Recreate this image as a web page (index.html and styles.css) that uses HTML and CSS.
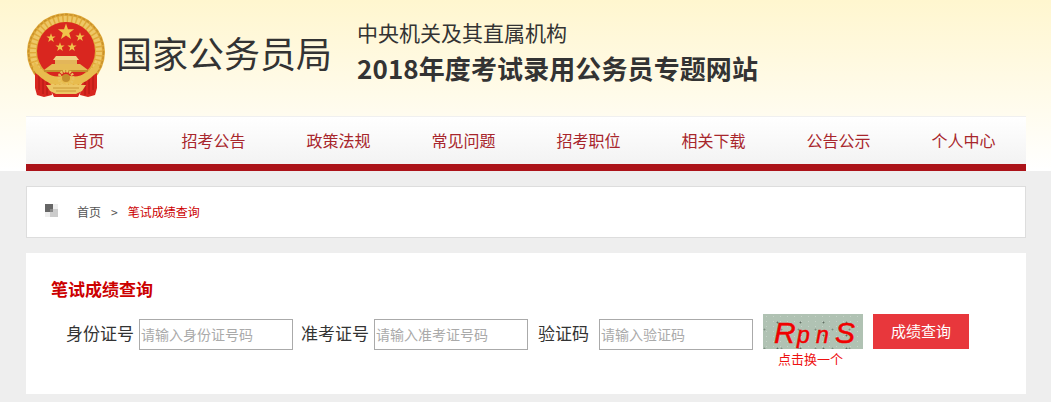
FILE: index.html
```html
<!DOCTYPE html>
<html lang="zh-CN">
<head>
    <meta charset="UTF-8">
    <meta name="viewport" content="width=device-width, initial-scale=1.0">
    <title>笔试成绩查询</title>
    <link rel="stylesheet" href="styles.css">
</head>

<body>
    <div class="top">
        <div class="wrap">
            <div class="head">
                <!-- 国徽 -->
                <svg class="emblem" viewBox="0 0 80 84" width="80" height="84">
                    <defs>
                        <polygon id="star" points="0,-1 0.235,-0.324 0.951,-0.309 0.38,0.124 0.588,0.809 0,0.4 -0.588,0.809 -0.38,0.124 -0.951,-0.309 -0.235,-0.324"/>
                    </defs>
                    <circle cx="40" cy="39" r="39" fill="#e0a93a"/>
                    <circle cx="40" cy="39" r="37.5" fill="none" stroke="#c8912a" stroke-width="1.5" stroke-dasharray="3 1.5"/>
                    <circle cx="40" cy="39" r="33" fill="none" stroke="#eec766" stroke-width="6" stroke-dasharray="3 1.5"/>
                    <circle cx="40" cy="38" r="29" fill="#d9261f"/>
                    <use href="#star" transform="translate(40 19) scale(8.5)" fill="#f0c24a"/>
                    <use href="#star" transform="translate(25 25) scale(4.8)" fill="#f0c24a"/>
                    <use href="#star" transform="translate(54 24) scale(4.8)" fill="#f0c24a"/>
                    <use href="#star" transform="translate(34 34) scale(4.8)" fill="#f0c24a"/>
                    <use href="#star" transform="translate(46 34) scale(4.8)" fill="#f0c24a"/>
                    <path d="M30 43 H50 L53 47 H27 Z" fill="#f0d283"/>
                    <path d="M29 47 H51 V51 H29 Z" fill="#e3b65a"/>
                    <path d="M26 51 H54 L62 57 H18 Z" fill="#e6bb55"/>
                    <path d="M18 57 H62 V59 H18 Z" fill="#c48e2c"/>
                    <path d="M9 60 L20 66 L25 72 L26 82 L18 84 L11 82 L9 75 Z" fill="#d8261f"/>
                    <path d="M71 60 L60 66 L55 72 L54 82 L62 84 L69 82 L71 75 Z" fill="#d8261f"/>
                    <path d="M25 78 H55 L52 84 H28 Z" fill="#d8261f"/>
                    <path d="M13 62 V77 M17 65 V81 M21 68 V82 M59 68 V82 M63 65 V81 M67 62 V77" stroke="#a8150f" stroke-width="0.8" fill="none"/>
                    <path d="M8 48 Q22 68 40 62 Q58 68 72 48 L73 56 Q58 76 40 70 Q22 76 7 56 Z" fill="#e8bc4e"/>
                    <circle cx="40" cy="65" r="7" fill="none" stroke="#e8c25e" stroke-width="3" stroke-dasharray="2 1"/>
                    <circle cx="40" cy="65" r="4" fill="#c48e2c"/>
                    <path d="M20 72 L60 72 L56 78 L50 81 L30 81 L24 78 Z" fill="#ecc765"/>
                    <path d="M27 75 H53 M30 78 H50" stroke="#c48e2c" stroke-width="0.8" fill="none"/>
                </svg>
                <div class="org">国家公务员局</div>
                <div class="site">
                    <div class="site-sub">中央机关及其直属机构</div>
                    <div class="site-name">2018年度考试录用公务员专题网站</div>
                </div>
            </div>
            <ul class="nav">
                <li>首页</li>
                <li>招考公告</li>
                <li>政策法规</li>
                <li>常见问题</li>
                <li>招考职位</li>
                <li>相关下载</li>
                <li>公告公示</li>
                <li>个人中心</li>
            </ul>
        </div>
    </div>

    <div class="wrap">
        <div class="crumb">
            <svg class="crumb-icon" viewBox="0 0 14 14" width="14" height="14">
                <rect x="0" y="0" width="8" height="8" fill="#666"/>
                <rect x="8" y="0" width="5" height="5" fill="#eee"/>
                <rect x="0" y="8" width="5" height="5" fill="#eee"/>
                <rect x="5" y="5" width="8" height="8" fill="#ccc"/>
                <rect x="5" y="5" width="3" height="3" fill="#888"/>
            </svg>
            <span class="crumb-home">首页</span>
            <span class="crumb-sep">&gt;</span>
            <span class="crumb-now">笔试成绩查询</span>
        </div>

        <div class="card">
            <h3 class="card-title">笔试成绩查询</h3>
            <div class="query">
                <label class="query-label">身份证号</label>
                <input class="query-input" type="text" placeholder="请输入身份证号码">
                <label class="query-label query-label-2">准考证号</label>
                <input class="query-input" type="text" placeholder="请输入准考证号码">
                <label class="query-label query-label-3">验证码</label>
                <input class="query-input" type="text" placeholder="请输入验证码">
                <div class="captcha">
                    <div class="captcha-img"><span class="cap-r">R</span><span>p</span><span>n</span><span class="cap-s">S</span></div>
                    <div class="captcha-tip">点击换一个</div>
                </div>
                <button class="query-btn">成绩查询</button>
            </div>
        </div>
    </div>
</body>
</html>
```

FILE: styles.css
```css
* {
    box-sizing: border-box;
}
html, body {
    margin: 0;
    padding: 0;
}
body {
    font-family: "Noto Sans CJK SC", "Liberation Sans", sans-serif;
    background-color: #eeeeee;
    color: #333;
    overflow: hidden;
}
.wrap {
    width: 1000px;
    margin-left: 26px;
}
.top {
    height: 171px;
    background: linear-gradient(#fff6cf, #ffffff);
}
.head {
    height: 116px;
    padding-top: 13px;
    display: flex;
    align-items: flex-start;
}
.emblem {
    flex: none;
}
.org {
    margin-left: 10px;
    margin-top: 14px;
    font-size: 36px;
    line-height: 50px;
    width: 214px;
    white-space: nowrap;
    color: #333;
}
.site {
    margin-left: 27px;
    margin-top: 6px;
}
.site-sub {
    font-size: 21px;
    line-height: 26px;
    color: #333;
}
.site-name {
    margin-top: 5px;
    font-size: 26px;
    line-height: 36px;
    font-weight: bold;
    letter-spacing: 0.1px;
    color: #333;
    white-space: nowrap;
}
.nav {
    list-style: none;
    margin: 0;
    padding: 0;
    height: 55px;
    display: flex;
    border-top: 1px solid #f0f0f0;
    border-bottom: 7px solid #ac1319;
    background: linear-gradient(#ffffff, #f3f3f3);
}
.nav li {
    width: 125px;
    text-align: center;
    font-size: 16px;
    line-height: 47px;
    color: #a8262c;
}
.crumb {
    margin-top: 15px;
    height: 52px;
    background-color: #fff;
    border: 1px solid #dddddd;
    display: flex;
    align-items: center;
    padding: 0 0 2px 18px;
    font-size: 12px;
}
.crumb-icon {
    flex: none;
}
.crumb-home {
    margin-left: 18px;
    color: #555;
}
.crumb-sep {
    margin-left: 10px;
    color: #555;
}
.crumb-now {
    margin-left: 10px;
    color: #cc0000;
}
.card {
    margin-top: 15px;
    height: 141px;
    background-color: #fff;
    padding: 24px 25px 0;
}
.card-title {
    margin: 0;
    font-size: 17px;
    line-height: 24px;
    font-weight: bold;
    color: #cc0000;
}
.query {
    margin-top: 13px;
    padding-left: 15px;
    display: flex;
    align-items: flex-start;
}
.query-label {
    margin-top: 3px;
    margin-right: 5px;
    font-size: 17px;
    line-height: 32px;
    color: #333;
    white-space: nowrap;
}
.query-label-2 {
    margin-left: 8px;
}
.query-label-3 {
    margin-left: 10px;
    margin-right: 10px;
}
.query-input {
    width: 154px;
    height: 31px;
    margin-top: 5px;
    padding: 0 1px 2px;
    border: 1px solid #aaaaaa;
    border-radius: 0;
    outline: none;
    font-family: inherit;
    font-size: 14px;
    background: #fff;
}
.query-input::placeholder {
    color: #aaaaaa;
    opacity: 1;
}
.captcha {
    margin-left: 10px;
    width: 100px;
}
.captcha-img {
    height: 35px;
    display: flex;
    align-items: baseline;
    padding-left: 11px;
    font-family: "Liberation Sans", sans-serif;
    font-style: italic;
    font-size: 23px;
    line-height: 38px;
    color: #f00000;
    -webkit-text-stroke: 0.5px #f00000;
    overflow: hidden;
    background-color: #b0c2b3;
    background-image:
        radial-gradient(circle, #5f6f63 0.7px, transparent 1.2px),
        radial-gradient(circle, #7e8f82 0.7px, transparent 1.2px),
        radial-gradient(circle, #c6d3c8 0.6px, transparent 1px);
    background-size: 23px 13px, 17px 19px, 7px 5px;
    background-position: 3px 2px, 10px 6px, 0 0;
}
.captcha-img span {
    width: 19px;
}
.captcha-img .cap-r {
    width: 23px;
    font-size: 30px;
}
.captcha-img .cap-s {
    font-size: 30px;
}
.captcha-tip {
    margin-top: 2px;
    padding-right: 5px;
    text-align: center;
    font-size: 13px;
    line-height: 16px;
    color: #ee1111;
}
.query-btn {
    margin-left: 10px;
    width: 96px;
    height: 35px;
    padding: 0 0 2px;
    border: none;
    border-radius: 0;
    background-color: #e8373c;
    color: #fff;
    font-family: inherit;
    font-size: 15px;
    cursor: pointer;
}
```
